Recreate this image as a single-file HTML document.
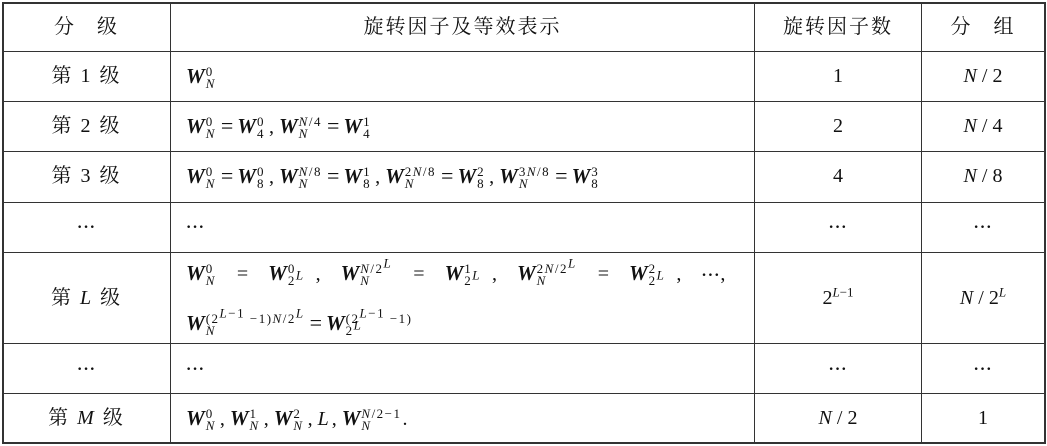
<!DOCTYPE html>
<html><head><meta charset="utf-8"><style>
body{margin:0;width:1047px;height:446px;background:#fff;overflow:hidden;font-family:"Liberation Serif","Noto Serif CJK SC",serif;color:#111;}
.h{position:absolute;height:0;border-top:1.5px solid #333;}
.v{position:absolute;width:0;border-left:1.5px solid #333;}
.t{position:absolute;font-size:20px;white-space:nowrap;line-height:22px;}
.cj{letter-spacing:2px}
.c{text-align:center;}
i{font-style:italic}
b{font-weight:bold;font-style:italic;font-size:21px}
sup{font-size:13px;line-height:0}
.ss{display:inline-block;vertical-align:middle;line-height:12px;font-size:13px;margin-left:1px;margin-right:1px;letter-spacing:1.5px}
.ss span{display:block}
.e{margin:0 4px;font-size:22px}
.m{margin:0 5px 0 3px}
.d{font-weight:bold;letter-spacing:1px;font-size:16px}
</style></head><body>
<div class="h" style="left:2px;width:1044px;top:2px;border-top-width:2.5px"></div>
<div class="h" style="left:2px;width:1044px;top:51px"></div>
<div class="h" style="left:2px;width:1044px;top:101px"></div>
<div class="h" style="left:2px;width:1044px;top:151px"></div>
<div class="h" style="left:2px;width:1044px;top:202px"></div>
<div class="h" style="left:2px;width:1044px;top:252px"></div>
<div class="h" style="left:2px;width:1044px;top:343px"></div>
<div class="h" style="left:2px;width:1044px;top:393px"></div>
<div class="h" style="left:2px;width:1044px;top:442px;border-top-width:2.5px"></div>
<div class="v" style="left:2px;top:2px;height:442px;border-left-width:2.5px"></div>
<div class="v" style="left:170px;top:2px;height:442px"></div>
<div class="v" style="left:754px;top:2px;height:442px"></div>
<div class="v" style="left:921px;top:2px;height:442px"></div>
<div class="v" style="left:1044px;top:2px;height:442px;border-left-width:2.5px"></div>

<div class="t c cj" style="left:3px;width:167px;top:16px">分&nbsp;&nbsp;&nbsp;级</div>
<div class="t c cj" style="left:171px;width:583px;top:16px">旋转因子及等效表示</div>
<div class="t c cj" style="left:755px;width:166px;top:16px">旋转因子数</div>
<div class="t c cj" style="left:922px;width:122px;top:16px">分&nbsp;&nbsp;&nbsp;组</div>

<div class="t c cj" style="left:3px;width:167px;top:65px">第 1 级</div>
<div class="t c cj" style="left:3px;width:167px;top:115px">第 2 级</div>
<div class="t c cj" style="left:3px;width:167px;top:165px">第 3 级</div>
<div class="t c" style="left:3px;width:167px;top:215px"><span class="d">···</span></div>
<div class="t c cj" style="left:3px;width:167px;top:287px">第 <i>L</i> 级</div>
<div class="t c" style="left:3px;width:167px;top:357px"><span class="d">···</span></div>
<div class="t c cj" style="left:3px;width:167px;top:407px">第 <i>M</i> 级</div>

<div class="t" style="left:186px;top:65px"><b>W</b><span class="ss"><span>0</span><i>N</i></span></div>
<div class="t" style="left:186px;top:115px"><b>W</b><span class="ss"><span>0</span><i>N</i></span><span class="e">=</span><b>W</b><span class="ss"><span>0</span><span>4</span></span><span class="m">,</span><b>W</b><span class="ss"><span><i>N</i>/4</span><i>N</i></span><span class="e">=</span><b>W</b><span class="ss"><span>1</span><span>4</span></span></div>
<div class="t" style="left:186px;top:165px"><b>W</b><span class="ss"><span>0</span><i>N</i></span><span class="e">=</span><b>W</b><span class="ss"><span>0</span><span>8</span></span><span class="m">,</span><b>W</b><span class="ss"><span><i>N</i>/8</span><i>N</i></span><span class="e">=</span><b>W</b><span class="ss"><span>1</span><span>8</span></span><span class="m">,</span><b>W</b><span class="ss"><span>2<i>N</i>/8</span><i>N</i></span><span class="e">=</span><b>W</b><span class="ss"><span>2</span><span>8</span></span><span class="m">,</span><b>W</b><span class="ss"><span>3<i>N</i>/8</span><i>N</i></span><span class="e">=</span><b>W</b><span class="ss"><span>3</span><span>8</span></span></div>
<div class="t" style="left:186px;top:215px"><span class="d">···</span></div>
<div class="t" style="left:186px;top:262px;word-spacing:5px"><b>W</b><span class="ss"><span>0</span><i>N</i></span> &nbsp;= &nbsp;<b>W</b><span class="ss"><span>0</span><span>2<sup><i>L</i></sup></span></span> , &nbsp;<b>W</b><span class="ss"><span><i>N</i>/2<sup><i>L</i></sup></span><i>N</i></span> &nbsp;= &nbsp;<b>W</b><span class="ss"><span>1</span><span>2<sup><i>L</i></sup></span></span> , &nbsp;<b>W</b><span class="ss"><span>2<i>N</i>/2<sup><i>L</i></sup></span><i>N</i></span> &nbsp;= &nbsp;<b>W</b><span class="ss"><span>2</span><span>2<sup><i>L</i></sup></span></span> , &nbsp;<span class="d">···</span>,</div>
<div class="t" style="left:186px;top:312px"><b>W</b><span class="ss"><span>(2<sup><i>L</i>−1</sup> −1)<i>N</i>/2<sup><i>L</i></sup></span><i>N</i></span><span class="e">=</span><b>W</b><span class="ss"><span>(2<sup><i>L</i>−1</sup> −1)</span><span>2<sup><i>L</i></sup></span></span></div>
<div class="t" style="left:186px;top:357px"><span class="d">···</span></div>
<div class="t" style="left:186px;top:407px"><b>W</b><span class="ss"><span>0</span><i>N</i></span><span class="m">,</span><b>W</b><span class="ss"><span>1</span><i>N</i></span><span class="m">,</span><b>W</b><span class="ss"><span>2</span><i>N</i></span><span class="m">,</span><i>L</i><span class="m">,</span><b>W</b><span class="ss"><span><i>N</i>/2−1</span><i>N</i></span>.</div>

<div class="t c" style="left:755px;width:166px;top:65px">1</div>
<div class="t c" style="left:755px;width:166px;top:115px">2</div>
<div class="t c" style="left:755px;width:166px;top:165px">4</div>
<div class="t c" style="left:755px;width:166px;top:215px"><span class="d">···</span></div>
<div class="t c" style="left:755px;width:166px;top:287px">2<sup><i>L</i>−1</sup></div>
<div class="t c" style="left:755px;width:166px;top:357px"><span class="d">···</span></div>
<div class="t c" style="left:755px;width:166px;top:407px"><i>N</i> / 2</div>

<div class="t c" style="left:922px;width:122px;top:65px"><i>N</i> / 2</div>
<div class="t c" style="left:922px;width:122px;top:115px"><i>N</i> / 4</div>
<div class="t c" style="left:922px;width:122px;top:165px"><i>N</i> / 8</div>
<div class="t c" style="left:922px;width:122px;top:215px"><span class="d">···</span></div>
<div class="t c" style="left:922px;width:122px;top:287px"><i>N</i> / 2<sup><i>L</i></sup></div>
<div class="t c" style="left:922px;width:122px;top:357px"><span class="d">···</span></div>
<div class="t c" style="left:922px;width:122px;top:407px">1</div>
</body></html>
